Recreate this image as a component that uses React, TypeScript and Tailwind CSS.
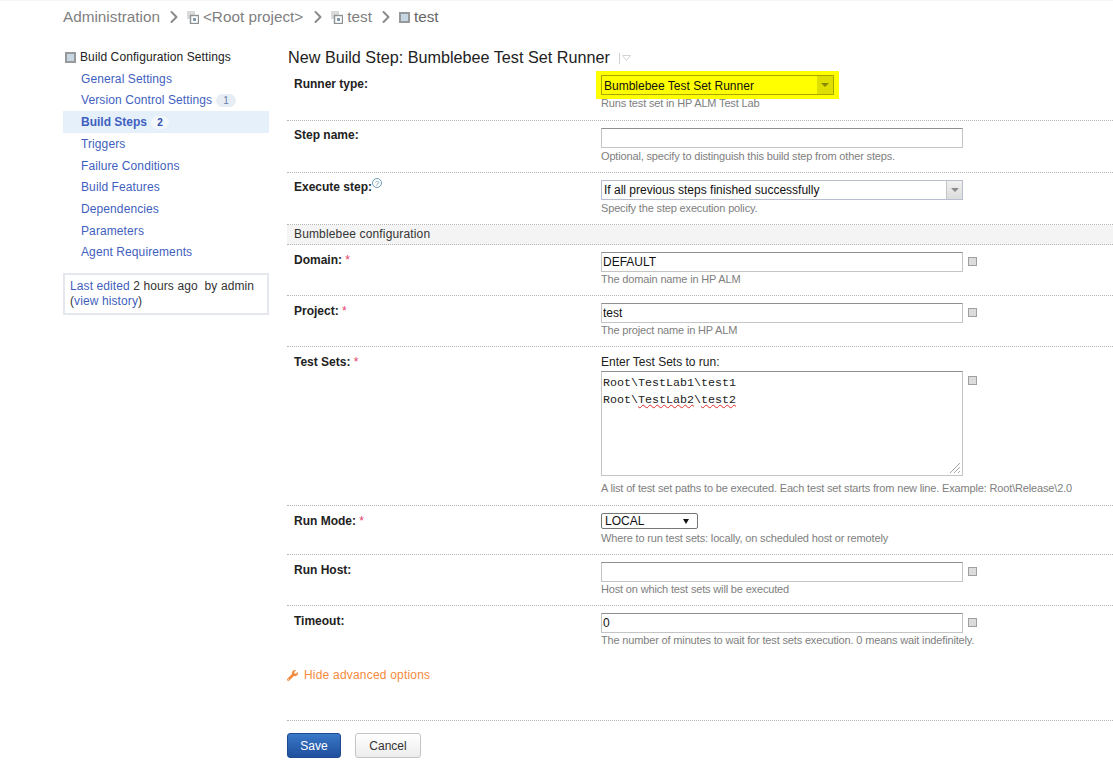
import React from 'react';
import { ChevronRight } from 'lucide-react';
import { FaWrench } from 'react-icons/fa';

const navItems = [
  { name: 'General Settings', h: 'h-[21px]' },
  { name: 'Version Control Settings', badge: '1', h: 'h-[22px]' },
  { name: 'Build Steps', badge: '2', active: true, h: 'h-[22px]' },
  { name: 'Triggers', h: 'h-[22px]' },
  { name: 'Failure Conditions', h: 'h-[21px]' },
  { name: 'Build Features', h: 'h-[22px]' },
  { name: 'Dependencies', h: 'h-[22px]' },
  { name: 'Parameters', h: 'h-[21px]' },
  { name: 'Agent Requirements', h: 'h-[22px]' },
];

function ConfigIcon({ className = '' }: { className?: string }) {
  return (
    <span className={`inline-block w-[11px] h-[11px] border-2 border-[#97999b] bg-[#c6d6e3] shrink-0 ${className}`} />
  );
}

function ProjectIcon() {
  return (
    <svg width="12" height="13" viewBox="0 0 12 13" className="shrink-0">
      <rect x="0" y="0" width="8" height="8" fill="#d8dadc" />
      <rect x="3.5" y="4.5" width="8" height="8" fill="#fff" stroke="#8e9294" strokeWidth="1.4" />
      <rect x="6" y="7" width="3" height="3" fill="#7f98aa" />
    </svg>
  );
}

function Sep({ className = '' }: { className?: string }) {
  return <ChevronRight size={20} strokeWidth={2.4} className={`text-[#8a8a8a] shrink-0 ${className}`} />;
}

function Crumbs() {
  return (
    <div className="flex items-center h-[32px] pl-[63px] text-[15.3px] text-[#7f7f7f]">
      <span>Administration</span>
      <Sep className="ml-[4px] mr-[3px]" />
      <ProjectIcon />
      <span className="ml-[4px]">&lt;Root project&gt;</span>
      <Sep className="ml-[5px] mr-[3px]" />
      <ProjectIcon />
      <span className="ml-[4px]">test</span>
      <Sep className="ml-[4px] mr-[3px]" />
      <ConfigIcon />
      <span className="ml-[4px] text-[#666]">test</span>
    </div>
  );
}

function Sidebar() {
  return (
    <div className="w-[206px] shrink-0 text-xs tracking-[0.1px]">
      <div className="flex items-center h-[22px] pl-[2px] text-[#222]">
        <ConfigIcon className="mr-[4px]" />
        <span>Build Configuration Settings</span>
      </div>
      {navItems.map((item) => (
        <div
          key={item.name}
          className={`flex items-center pl-[18px] text-[#3f5fc0] ${item.h} ${item.active ? 'bg-[#e6f0fa] font-bold tracking-normal' : ''}`}
        >
          <span>{item.name}</span>
          {item.badge && (
            <span className={`ml-[4px] h-[13px] rounded-full text-[10px] leading-[13px] text-center ${item.active ? 'w-[18px] text-[#2f4fa8] bg-[#f2f7fc] font-bold' : 'w-[20px] text-[#6a7fa8] bg-[#e6edf5] font-normal'}`}>
              {item.badge}
            </span>
          )}
        </div>
      ))}
      <div className="mt-[10px] h-[42px] border-[2px] border-[#e4e8ee] pl-[5px] pt-[4px] leading-[15px] text-[#333]">
        <span className="text-[#3f5fc0]">Last edited</span> 2 hours ago &nbsp;by admin
        <br />
        (<span className="text-[#3f5fc0]">view history</span>)
      </div>
    </div>
  );
}

function Hint({ children, className = 'mt-[1px]' }: { children: React.ReactNode; className?: string }) {
  return <div className={`text-[11px] tracking-[-0.16px] leading-[13px] text-[#808080] whitespace-nowrap ${className}`}>{children}</div>;
}

function Row({ label, req, help, hint, h, tight, last, children }: {
  label: string;
  req?: boolean;
  help?: boolean;
  hint?: string;
  h: string;
  tight?: boolean;
  last?: boolean;
  children: React.ReactNode;
}) {
  return (
    <div className={`flex ${last ? '' : 'border-b border-dotted border-[#b5b5b5]'} ${h}`}>
      <div className={`w-[314px] shrink-0 pl-[7px] font-bold text-[#222] leading-[14px] ${tight ? 'pt-[7px]' : 'pt-[8px]'}`}>
        {label}
        {req && <span className="text-[#e0406a] font-normal"> *</span>}
        {help && (
          <span className="relative -top-[2px] inline-block align-top w-[10px] h-[10px] rounded-full border border-[#6f9db5] text-[#6f9db5] text-[8px] leading-[9px] text-center font-normal">?</span>
        )}
      </div>
      <div className="flex-1 pt-[7px]">
        {children}
        {hint && <Hint className={tight ? 'mt-[2px]' : 'mt-[1px]'}>{hint}</Hint>}
      </div>
    </div>
  );
}

function ConfigGlyph() {
  return <span className="inline-block shrink-0 ml-[5px] w-[9px] h-[9px] border border-[#a0a0a0] bg-[#dcdcdc]" />;
}

function TextBox({ value = '', param = true }: { value?: string; param?: boolean }) {
  return (
    <div className="flex items-center">
      <input
        readOnly
        value={value}
        className="w-[362px] h-[20px] border border-[#c4c4c4] border-t-[#8f8f8f] bg-white px-0 pl-[1px] text-xs text-[#111] outline-none"
      />
      {param && <span className="flex -mt-[1px]"><ConfigGlyph /></span>}
    </div>
  );
}

function Squiggle({ children }: { children: React.ReactNode }) {
  return <span className="underline decoration-wavy decoration-[#e03030] decoration-1 underline-offset-1">{children}</span>;
}

function ArrowBtn({ className = '', arrow = '' }: { className?: string; arrow?: string }) {
  return (
    <span className={`w-[16px] h-full flex items-center justify-center ${className}`}>
      <span className={`w-0 h-0 border-x-[4px] border-x-transparent border-t-[4px] ${arrow}`} />
    </span>
  );
}

export default function App() {
  return (
    <div className="w-[1113px] h-[768px] overflow-hidden bg-white text-xs border-t border-[#f4f4f4]" style={{ fontFamily: '"Liberation Sans", Arial, sans-serif' }}>
      <Crumbs />
      <div className="flex pl-[63px] pt-[13px]">
        <Sidebar />
        <div className="ml-[18px] flex-1">
          <div className="flex items-center h-[24px] pl-[1px] text-[16.2px] text-[#222]">
            New Build Step: Bumblebee Test Set Runner
            <span className="ml-[9px] h-[11px] border-l border-[#d0d0d0]" />
            <svg width="9" height="6" viewBox="0 0 9 6" className="ml-[2px]">
              <path d="M0.5 0.5 H8.5 L4.5 5.5 Z" fill="none" stroke="#d4d4d4" />
            </svg>
          </div>
          <Row label="Runner type:" h="h-[52px] -mt-[1px]">
            <div className="relative h-[20px]">
              <div className="absolute -left-[5px] -top-[5px] w-[243px] h-[28px] bg-[#ffff00] flex items-center pl-[5px]">
                <div className="w-[233px] h-[20px] border border-[#a8a800] flex items-center justify-between text-xs text-[#111] pl-[2px]">
                  <span className="pt-[2px]">Bumblebee Test Set Runner</span>
                  <ArrowBtn className="bg-[#dede00]" arrow="border-t-[#8a8a00]" />
                </div>
              </div>
            </div>
            <Hint>Runs test set in HP ALM Test Lab</Hint>
          </Row>
          <Row label="Step name:" tight hint="Optional, specify to distinguish this build step from other steps." h="h-[52px]">
            <TextBox param={false} />
          </Row>
          <Row label="Execute step:" tight help hint="Specify the step execution policy." h="h-[52px]">
            <div className="w-[362px] h-[20px] border border-[#b9bdd0] flex items-center justify-between pl-[2px] text-xs text-[#111]">
              If all previous steps finished successfully
              <ArrowBtn className="bg-gradient-to-b from-[#f0f0f0] to-[#dcdcdc] border-l border-[#c4c4c4]" arrow="border-t-[#8a8a8a]" />
            </div>
          </Row>
          <div className="h-[20px] bg-[#f4f4f4] border-b border-dotted border-[#b5b5b5] pl-[7px] leading-[19px] text-[#333] tracking-[0.15px]">
            Bumblebee configuration
          </div>
          <Row label="Domain:" req hint="The domain name in HP ALM" h="h-[51px]">
            <TextBox value="DEFAULT" />
          </Row>
          <Row label="Project:" req hint="The project name in HP ALM" h="h-[51px]">
            <TextBox value="test" />
          </Row>
          <Row label="Test Sets:" req hint="A list of test set paths to be executed. Each test set starts from new line. Example: Root\Release\2.0" h="h-[159px]">
            <div className="leading-[14px] text-[#222] mt-[1px] mb-[2px]">Enter Test Sets to run:</div>
            <div className="flex items-start mb-[6px]">
              <div className="relative w-[362px] h-[105px] border border-[#c4c4c4] border-t-[#8f8f8f] pl-[1px] pt-[3px] text-[#222] leading-[17px] text-[11.67px]" style={{ fontFamily: '"Liberation Mono", monospace' }}>
                <div>Root\TestLab1\test1</div>
                <div>Root\<Squiggle>TestLab2</Squiggle>\<Squiggle>test2</Squiggle></div>
                <svg width="12" height="12" viewBox="0 0 12 12" className="absolute right-[1px] bottom-[1px]" stroke="#a8a8a8">
                  <path d="M1 11 L11 1 M5 11 L11 5 M9 11 L11 9" />
                </svg>
              </div>
              <span className="mt-[5px] flex"><ConfigGlyph /></span>
            </div>
          </Row>
          <Row label="Run Mode:" req hint="Where to run test sets: locally, on scheduled host or remotely" h="h-[49px]">
            <div className="w-[97px] h-[16px] mb-[3px] border border-[#777] rounded-[2px] flex items-center justify-between px-[3px] text-xs text-[#111]">
              LOCAL
              <span className="mr-[5px] w-0 h-0 border-x-[3px] border-x-transparent border-t-[5px] border-t-[#111]" />
            </div>
          </Row>
          <Row label="Run Host:" hint="Host on which test sets will be executed" h="h-[51px]">
            <TextBox />
          </Row>
          <Row label="Timeout:" last hint="The number of minutes to wait for test sets execution. 0 means wait indefinitely." h="h-[50px]">
            <TextBox value="0" />
          </Row>
          <div className="flex items-center h-[20px] mt-[9px] text-[#f58a3c] tracking-[0.2px]">
            <FaWrench size={11} className="mr-[6px]" />
            Hide advanced options
          </div>
          <div className="mt-[35px] border-t border-dotted border-[#b5b5b5] pt-[12px] flex items-center">
            <button className="w-[54px] h-[25px] rounded-[3px] bg-gradient-to-b from-[#3a78c8] to-[#1f4f9c] border border-[#1f4a90] text-white text-xs">Save</button>
            <button className="ml-[14px] w-[66px] h-[25px] rounded-[3px] bg-gradient-to-b from-white to-[#ececec] border border-[#c4c4c4] text-[#333] text-xs">Cancel</button>
          </div>
        </div>
      </div>
    </div>
  );
}
